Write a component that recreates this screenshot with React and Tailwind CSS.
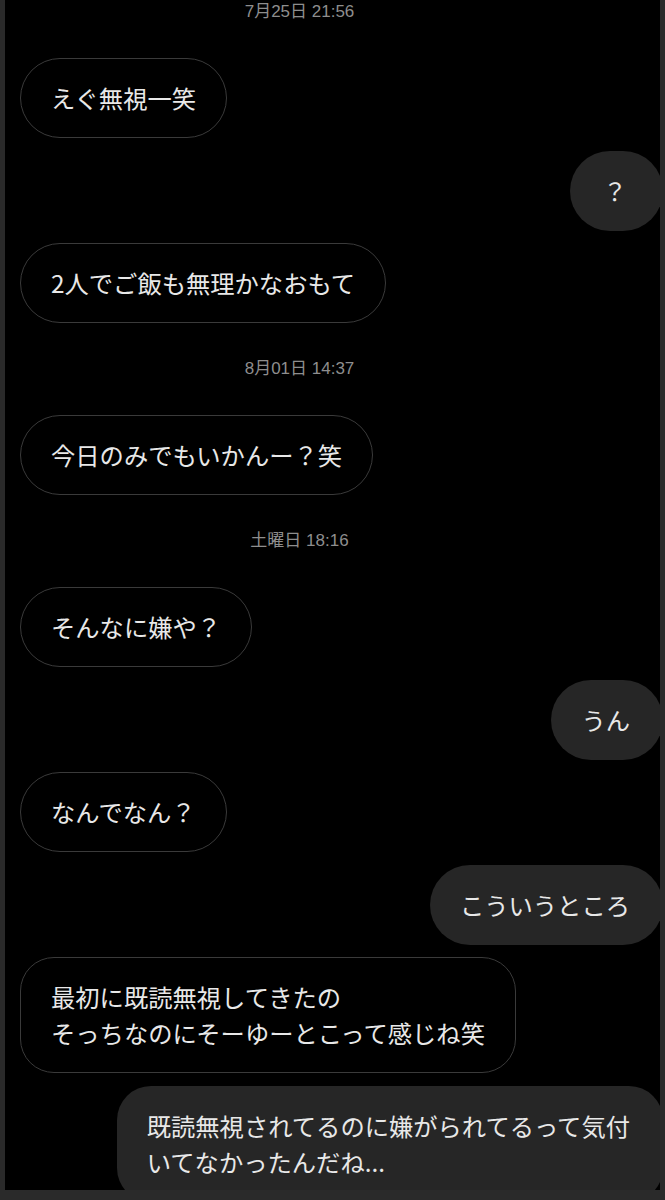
const font = { fontFamily: '"Noto Sans CJK JP", "Noto Sans", sans-serif' };

const messages = [
  { type: "time", text: "7月25日 21:56", first: true },
  { type: "in", text: "えぐ無視一笑" },
  { type: "out", text: "？" },
  { type: "in", text: "2人でご飯も無理かなおもて" },
  { type: "time", text: "8月01日 14:37" },
  { type: "in", text: "今日のみでもいかんー？笑" },
  { type: "time", text: "土曜日 18:16" },
  { type: "in", text: "そんなに嫌や？" },
  { type: "out", text: "うん" },
  { type: "in", text: "なんでなん？" },
  { type: "out", text: "こういうところ" },
  { type: "in", text: "最初に既読無視してきたの\nそっちなのにそーゆーとこって感じね笑", multi: true },
  { type: "out", text: "既読無視されてるのに嫌がられてるって気付\nいてなかったんだね...", multi: true },
];

function TimeStamp({ text, first }) {
  return (
    <div
      className={`flex justify-center pr-[66px] h-[24px] items-center text-[17px] text-[#8e8e8e] ${first ? "mb-[34px]" : "mt-[34px] mb-[34px]"}`}
      style={{ fontFamily: '"Liberation Sans", "Noto Sans CJK JP", sans-serif' }}
    >
      {text}
    </div>
  );
}

function Bubble({ text, out, multi }) {
  return (
    <div
      className={`whitespace-pre-line text-[24.3px] leading-[36px] text-[#e8e8e8] min-w-[93px] text-center shrink-0 ${
        multi ? "rounded-[34px] text-left" : "rounded-[40px]"
      } ${
        out
          ? "self-end bg-[#262626] mr-[-3px] pl-[30px] pr-[33px] py-[22px]"
          : "self-start ml-[15px] border border-[#3a3a3a] bg-black px-[30px] py-[21px]"
      }`}
      style={font}
    >
      {text}
    </div>
  );
}

export default function App() {
  let prevBubble = false;
  return (
    <div className="w-[665px] h-[1200px] bg-[#2a2a2a] pl-[5px] pr-[5px] pb-[10px]">
      <div className="h-[1190px] bg-black overflow-hidden flex flex-col">
        {messages.map((m, i) => {
          if (m.type === "time") {
            prevBubble = false;
            return <TimeStamp key={i} text={m.text} first={m.first} />;
          }
          const needsGap = prevBubble;
          prevBubble = true;
          return (
            <div key={i} className={`flex flex-col ${needsGap ? "mt-[12.5px]" : ""}`}>
              <Bubble text={m.text} out={m.type === "out"} multi={m.multi} />
            </div>
          );
        })}
      </div>
    </div>
  );
}
